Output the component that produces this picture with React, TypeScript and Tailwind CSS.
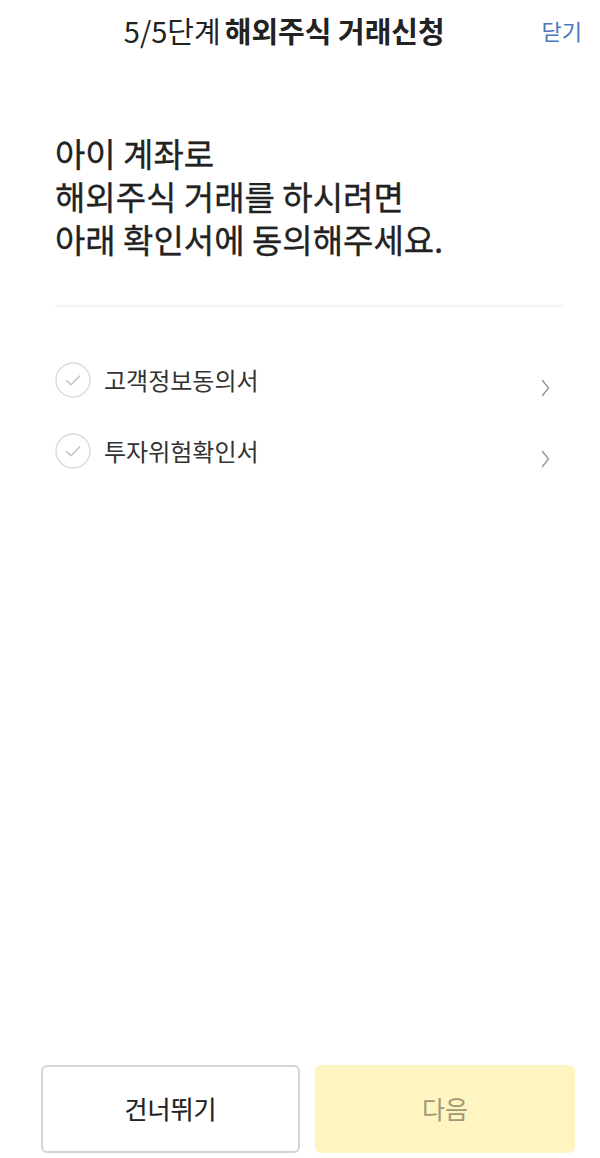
const font = {
  fontFamily: '"Noto Sans CJK KR", "Noto Sans", sans-serif',
};

const docs = ["고객정보동의서", "투자위험확인서"];

function CheckCircle() {
  return (
    <svg width="36" height="36" viewBox="0 0 36 36" fill="none">
      <circle cx="18" cy="18" r="17" stroke="#dcdcdc" strokeWidth="1.5" />
      <path
        d="M11.5 18.5l4.5 4.2 8.5-8.7"
        stroke="#c4c4c4"
        strokeWidth="1.5"
        strokeLinecap="round"
        strokeLinejoin="round"
      />
    </svg>
  );
}

function Chevron() {
  return (
    <svg width="9" height="18" viewBox="0 0 9 18" fill="none">
      <path
        d="M1.5 1.5l6 7.5-6 7.5"
        stroke="#9a9a9a"
        strokeWidth="1.5"
        strokeLinecap="round"
        strokeLinejoin="round"
      />
    </svg>
  );
}

export default function App() {
  return (
    <div
      className="flex h-[1158px] w-[600px] flex-col bg-white text-[#222]"
      style={font}
    >
      <header className="flex h-[60px] items-center pl-[27px] pr-[18px]">
        <h1 className="flex-1 text-center text-[29px] leading-none">
          <span className="font-normal">5/5단계</span>
          <span className="ml-[4px] font-bold">해외주식 거래신청</span>
        </h1>
        <button className="text-[22px] leading-none text-[#4b77bb]">닫기</button>
      </header>

      <div className="pl-[55px] pr-[37px]">
        <div className="mt-[72px] text-[33px] font-normal leading-[43px] [-webkit-text-stroke:0.35px_#222]">
          <div className="h-[43px]">아이 계좌로</div>
          <div className="h-[43px]">해외주식 거래를 하시려면</div>
          <div className="h-[43px]">아래 확인서에 동의해주세요.</div>
        </div>

        <div className="mt-[44px] h-[2px] w-full bg-[#f4f4f4]" />

        <ul className="mt-[37px]">
          {docs.map((d) => (
            <li key={d} className="flex h-[71px] items-center">
              <CheckCircle />
              <span className="ml-[13px] flex-1 text-[24px] leading-none text-[#333]">
                {d}
              </span>
              <span className="mr-[13px] mt-[17px] flex">
                <Chevron />
              </span>
            </li>
          ))}
        </ul>
      </div>

      <div className="flex-1" />

      <div className="flex gap-[15px] pb-[5px] pl-[41px]">
        <button className="flex h-[88px] w-[259px] items-center justify-center rounded-[6px] border-2 border-[#d4d4d4] bg-white text-[25px] font-normal text-[#222] [-webkit-text-stroke:0.2px_#222]">
          건너뛰기
        </button>
        <button className="flex h-[88px] w-[260px] items-center justify-center rounded-[6px] bg-[#fff5c1] text-[25px] font-normal text-[#9e9a78]">
          다음
        </button>
      </div>
    </div>
  );
}
